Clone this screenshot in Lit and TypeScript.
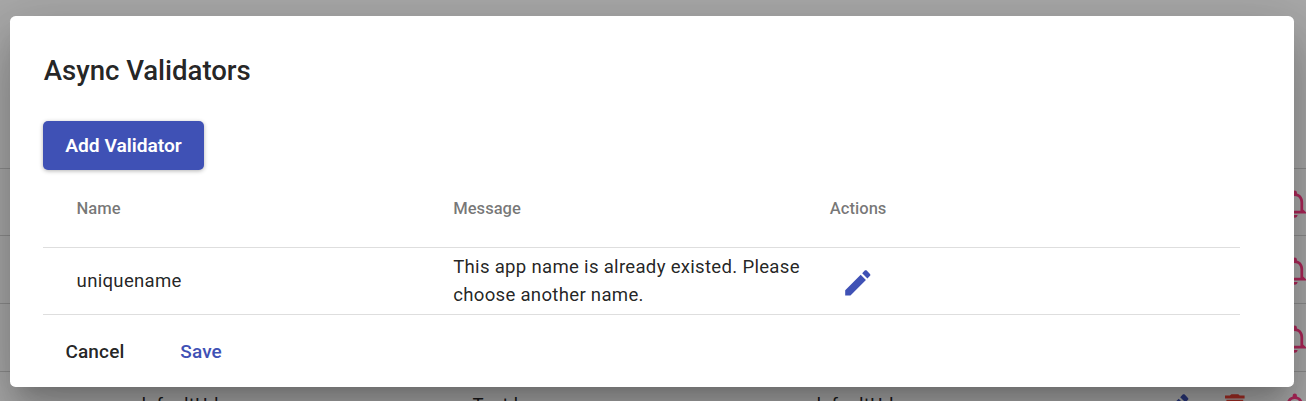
import { LitElement, html, css, svg } from "lit";
import { customElement, property } from "lit/decorators.js";

const ICONS: Record<string, string> = {
  edit: "M3 17.25V21h3.75L17.81 9.94l-3.75-3.75L3 17.25zM20.71 7.04c.39-.39.39-1.02 0-1.41l-2.34-2.34c-.39-.39-1.02-.39-1.41 0l-1.83 1.83 3.75 3.75 1.83-1.83z",
  delete: "M6 19c0 1.1.9 2 2 2h8c1.1 0 2-.9 2-2V7H6v12zM19 4h-3.5l-1-1h-5l-1 1H5v2h14V4z",
  bell: "M12 22c1.1 0 2-.9 2-2h-4c0 1.1.9 2 2 2zm6-6v-5c0-3.07-1.63-5.64-4.5-6.32V4c0-.83-.67-1.5-1.5-1.5s-1.5.67-1.5 1.5v.68C7.64 5.36 6 7.92 6 11v5l-2 2v1h16v-1l-2-2zm-2 1H8v-6c0-2.48 1.51-4.5 4-4.5s4 2.02 4 4.5v6z",
};

@customElement("md-icon")
export class MdIcon extends LitElement {
  @property() name = "edit";
  static styles = css`
    :host { display: block; width: 33.6px; height: 33.6px; }
    svg { display: block; width: 100%; height: 100%; fill: currentColor; }
  `;
  render() {
    return html`<svg viewBox="0 0 24 24">${svg`<path d=${ICONS[this.name]}></path>`}</svg>`;
  }
}

@customElement("page-rows")
export class PageRows extends LitElement {
  static styles = css`
    :host { display: block; padding-top: 101.3px; background: #fafafa; }
    .row {
      display: grid;
      grid-template-columns: 337px 338px 348px 1fr;
      height: 67.6px;
      box-sizing: border-box;
      padding-left: 135.5px;
      align-items: center;
      border-bottom: 1px solid #d0d0d0;
      font-size: 18.6px;
      letter-spacing: 0.27px;
      color: rgba(0, 0, 0, 0.87);
    }
    .icons { display: flex; gap: 26.2px; padding-top: 3px; }
    .edit { color: #3f51b5; }
    .delete { color: #f44336; }
    .bell { color: #ff3a84; }
  `;
  private rows = [[], ["", "", ""], ["", "", ""], ["", "", ""], ["defaultUrl", "Text box", "defaultUrl"]];
  render() {
    return this.rows.map((r) =>
      r.length
        ? html`<div class="row">
            ${r.map((c) => html`<span>${c}</span>`)}
            <div class="icons">
              <md-icon class="edit" name="edit"></md-icon>
              <md-icon class="delete" name="delete"></md-icon>
              <md-icon class="bell" name="bell"></md-icon>
            </div>
          </div>`
        : html`<div class="row"></div>`
    );
  }
}

@customElement("app-root")
export class AppRoot extends LitElement {
  static styles = css`
    :host {
      display: block;
      position: relative;
      height: 401px;
      overflow: hidden;
      font-family: Roboto, "Liberation Sans", sans-serif;
      background: #fafafa;
    }
    .backdrop { position: absolute; inset: 0; background: rgba(0, 0, 0, 0.32); }
    .dialog {
      position: absolute;
      inset: 16px 12px 14px 10px;
      box-sizing: border-box;
      padding: 32.6px 54px 0 33px;
      border-radius: 5.6px;
      background: #fff;
      color: rgba(0, 0, 0, 0.87);
      box-shadow: 0 15.4px 21px -9.8px rgba(0, 0, 0, 0.2),
        0 33.6px 53.2px 4.2px rgba(0, 0, 0, 0.14),
        0 12.6px 64.4px 11.2px rgba(0, 0, 0, 0.12);
    }
    h2 {
      margin: 0 0 28.4px 0.8px;
      font-size: 27.6px;
      line-height: 44px;
      font-weight: 500;
      letter-spacing: -0.05px;
    }
    button {
      display: block;
      border: 0;
      padding: 0 22.4px;
      height: 49px;
      font: 500 19px/49px Roboto, "Liberation Sans", sans-serif;
      letter-spacing: 0.15px;
      background: none;
      color: inherit;
      border-radius: 5px;
    }
    .primary {
      width: 161px;
      background: #3f51b5;
      color: #fff;
      font-weight: 600;
      font-size: 19.2px;
      letter-spacing: 0;
      padding: 0 22px;
      box-shadow: 0 1px 4px rgba(0, 0, 0, 0.3);
      white-space: nowrap;
    }
    .save { color: #3f51b5; }
    .row {
      display: grid;
      grid-template-columns: repeat(3, 1fr);
      align-items: center;
      box-sizing: border-box;
      padding: 0 33.6px;
      height: 67px;
      border-bottom: 1px solid #dedede;
      font-size: 18.6px;
      line-height: 28px;
      letter-spacing: 0.29px;
    }
    .head {
      height: 78px;
      padding-top: 1.4px;
      font-size: 16.6px;
      font-weight: 500;
      letter-spacing: 0;
      color: rgba(0, 0, 0, 0.54);
    }
    .edit { margin: 3px 0 0 11.4px; color: #3f51b5; }
    .actions { display: flex; gap: 11px; margin-top: 12px; }
  `;
  render() {
    return html`
      <page-rows></page-rows>
      <div class="backdrop"></div>
      <div class="dialog">
        <h2>Async Validators</h2>
        <button class="primary">Add Validator</button>
        <div class="row head"><span>Name</span><span>Message</span><span>Actions</span></div>
        <div class="row">
          <span>uniquename</span>
          <span>This app name is already existed. Please choose another name.</span>
          <md-icon class="edit" name="edit"></md-icon>
        </div>
        <div class="actions">
          <button>Cancel</button>
          <button class="save">Save</button>
        </div>
      </div>
    `;
  }
}
